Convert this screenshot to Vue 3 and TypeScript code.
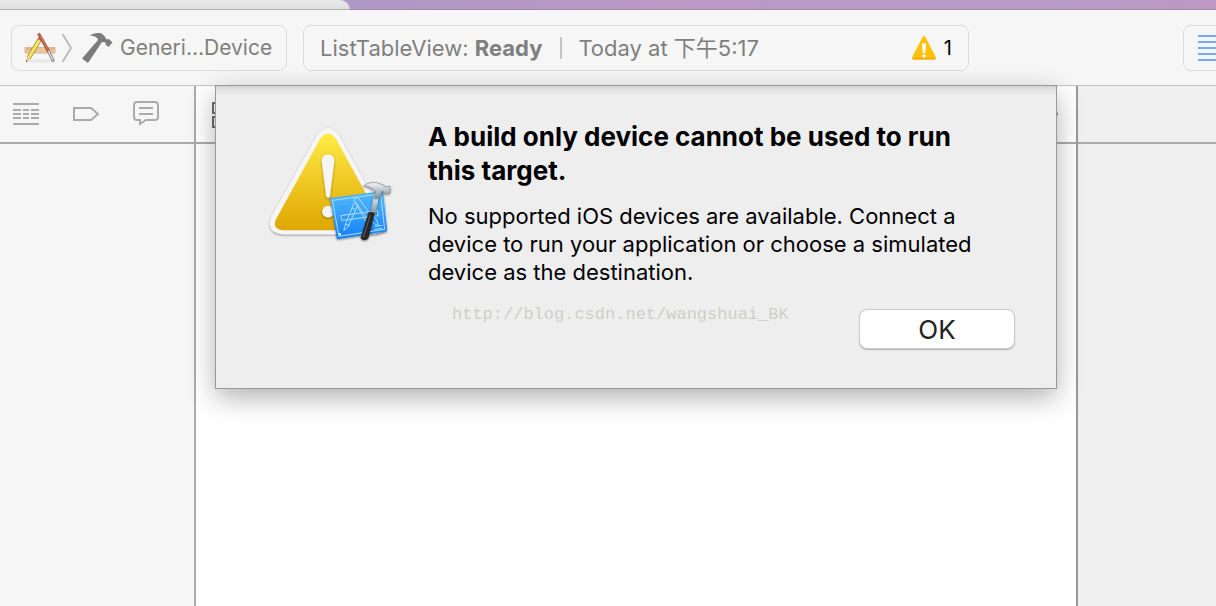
<script setup lang="ts">
import { ref } from 'vue'

const project = 'ListTableView:'
const state = 'Ready'
const time = 'Today at 下午5:17'
const warnings = 1
const sheetOpen = ref(true)
</script>

<template>
  <div class="window">
    <div class="desktop"><div class="tab"></div></div>

    <header class="toolbar">
      <button class="box scheme" type="button">
        <svg class="app-icon" viewBox="0 0 32 32" aria-hidden="true">
          <ellipse cx="16" cy="29" rx="14" ry="2" fill="#e9e9e9" />
          <path d="M1 15.500H31V21H1Z" fill="#ecc49c" stroke="#d9ab7e" stroke-width=".800" />
          <path d="M4 16v2M7 16v2M10 16v2M22 16v2M25 16v2M28 16v2" stroke="#bb8c60" stroke-width=".800" />
          <path d="M16 7L4.500 26" stroke="#9a8a3c" stroke-width="4.400" />
          <path d="M16 7L4.500 26" stroke="#f8e858" stroke-width="3" />
          <path d="M13.500 7l2-2.500 3 2-1.500 2.500z" fill="#f0545c" />
          <path d="M2.700 25l3.700 2.300L2 30z" fill="#e8c79a" />
          <path d="M2 28v2l1.500-1z" fill="#333" />
          <path d="M14.500 1.500L25 20" stroke="#9b4a36" stroke-width="3" />
          <path d="M15 2L25 19.500" stroke="#d9785c" stroke-width="1.500" />
          <path d="M24.500 19L29.500 29.500" stroke="#8a8080" stroke-width="3" />
          <path d="M24.500 19L29 28.500" stroke="#dedede" stroke-width="1.400" />
        </svg>
        <svg class="chevron" viewBox="0 0 12 30" aria-hidden="true">
          <path d="M1.500 1L10 15L1.500 29" fill="none" stroke="#b9b9b9" stroke-width="1.800" />
        </svg>
        <svg class="hammer" viewBox="0 0 32 32" aria-hidden="true">
          <path d="M9 3.500Q12 .700 19 1Q23 2 25.500 7.500L28 7L31.500 10.500L27.500 15L24.500 12.500V10.500L21 10L7 31L1 26.500L17 8Q16.500 4 9 3.500Z" fill="#7c7c7c" />
        </svg>
        <span class="device">Generi…Device</span>
      </button>

      <div class="box activity">
        <span>{{ project }} <b>{{ state }}</b></span>
        <span class="bar"></span>
        <span>{{ time }}</span>
        <span class="issues">
          <svg class="issue-icon" viewBox="0 0 26 26" aria-hidden="true">
            <path d="M13 2.500L23.500 23H2.500Z" fill="#ffc20c" stroke="#ffc20c" stroke-width="3" stroke-linejoin="round" />
            <path d="M2.500 23.500H23.500" stroke="#f5ae12" stroke-width="2" stroke-linecap="round" />
            <path d="M10.800 9q2.200-2 4.400 0l-1 9h-2.400z" fill="#fff" />
            <circle cx="13" cy="21" r="1.700" fill="#fff" />
          </svg>
          {{ warnings }}
        </span>
      </div>

      <button class="box layout" type="button" aria-label="Standard editor">
        <svg viewBox="0 0 32 28" aria-hidden="true">
          <path d="M0 2H32M0 8H32M0 14H32M0 20H32M0 26H32" stroke="#75a9f9" stroke-width="2" />
        </svg>
      </button>
    </header>

    <main class="workspace">
      <aside class="navigator">
        <nav class="strip nav-strip">
          <button class="nav" type="button" aria-label="Debug">
            <svg viewBox="0 0 28 28" aria-hidden="true">
              <path d="M1 4H27M1 24H27" stroke="#ababab" stroke-width="2" />
              <path d="M1 10H27M1 14H27M1 18H27" stroke="#ababab" stroke-width="2" stroke-dasharray="8 2 6 2 8" />
            </svg>
          </button>
          <button class="nav" type="button" aria-label="Breakpoints">
            <svg viewBox="0 0 28 28" aria-hidden="true">
              <path d="M2 8H19L26 14L19 20H2Z" fill="none" stroke="#ababab" stroke-width="2" />
            </svg>
          </button>
          <button class="nav" type="button" aria-label="Reports">
            <svg viewBox="0 0 28 28" aria-hidden="true">
              <path d="M5 2H23Q26 2 26 5V17Q26 20 23 20H14L8 24V20H5Q2 20 2 17V5Q2 2 5 2Z" fill="none" stroke="#ababab" stroke-width="2" />
              <path d="M7 8H21M7 14H21" stroke="#ababab" stroke-width="2" />
            </svg>
          </button>
        </nav>
      </aside>

      <section class="editor">
        <div class="strip jump-bar">
          <svg class="related" viewBox="0 0 28 28" aria-hidden="true">
            <path d="M1 3H11V13H1ZM1 17H11V27H1Z" fill="none" stroke="#707070" stroke-width="2" />
          </svg>
          <span class="dot"></span>
        </div>

        <div v-if="sheetOpen" class="sheet" role="alertdialog" aria-labelledby="sheet-title" aria-describedby="sheet-text">
          <svg class="alert-icon" viewBox="0 0 128 128" aria-hidden="true">
            <defs>
              <linearGradient id="yellow" x1="0" y1="0" x2="0" y2="1">
                <stop offset="0" stop-color="#ffeb45" />
                <stop offset="1" stop-color="#dfa602" />
              </linearGradient>
              <linearGradient id="blue" x1="0" y1="0" x2="0" y2="1">
                <stop offset="0" stop-color="#56bcfb" />
                <stop offset="1" stop-color="#147efb" />
              </linearGradient>
              <linearGradient id="steel" x1="0" y1="0" x2="0" y2="1">
                <stop offset="0" stop-color="#f4f7f9" />
                <stop offset="1" stop-color="#7d8c96" />
              </linearGradient>
              <filter id="soft" x="-20%" y="-20%" width="140%" height="140%">
                <feDropShadow dx="0" dy="1" stdDeviation="1.200" flood-opacity=".45" />
              </filter>
            </defs>
            <path filter="url(#soft)" d="M51 8Q62-6 73 8L119 92Q125 107 110 109H15Q-1 107 4 92Z" fill="#f6f6f6" />
            <path d="M54 12Q62 1 70 12L115 94Q119 104 107 105H17Q5 104 9 94Z" fill="url(#yellow)" />
            <g filter="url(#soft)" fill="#f5f5f5">
              <path d="M55.500 34Q56 28 62 28T68.500 34L64 70Q62 74 60 70Z" />
              <circle cx="62" cy="86" r="6" />
            </g>
            <g filter="url(#soft)"><path d="M64 72L118 65L122 106L71 114Z" fill="url(#blue)" /></g>
            <g fill="none" stroke="#a9defe" stroke-width="1">
              <path d="M66.500 74.500L115.500 68L119.500 104L73 111Z" />
              <path d="M75 90L112 85L113 90L76 95Z" />
              <path d="M88 78L79 101L78 105L82 102L92 80Q90 76 88 78ZM86 82l4 2M80 99l4 1" />
              <path d="M88 74L92 71L106 90L102 93ZM103 92Q110 100 113 100Q113 94 107 90M91 79L100 95" />
              <path d="M109 101l8-1M109 104l8-1" />
            </g>
            <path d="M73 109l2-.300" stroke="#fff" stroke-width="2" />
            <g filter="url(#soft)">
              <path d="M109 68L114 69L110 89H105Z" fill="url(#steel)" />
              <path d="M103.500 86L109.500 87L103 113Q99 117 95 113Z" fill="#252729" />
              <path d="M105 89L98 112" stroke="#606366" stroke-width="1" />
              <path d="M98 60Q107 53 118 59L121 61L125 60V67L121 68L117 65L114 73H109L110 65Q105 60 98 60Z" fill="url(#steel)" stroke="#71808a" stroke-width=".600" />
            </g>
          </svg>
          <div class="message">
            <h1 id="sheet-title">A build only device cannot be used to run this target.</h1>
            <p id="sheet-text">No supported iOS devices are available. Connect a device to run your application or choose a simulated device as the destination.</p>
            <div class="footer">
              <span class="watermark">http://blog.csdn.net/wangshuai_BK</span>
              <button class="ok" type="button" @click="sheetOpen = false">OK</button>
            </div>
          </div>
        </div>
      </section>

      <aside class="inspector"><div class="strip"></div></aside>
    </main>
  </div>
</template>

<style>
html,
body {
  margin: 0;
  overflow: hidden;
}
</style>

<style scoped>
.window {
  display: flex;
  flex-direction: column;
  height: 100vh;
  font-family: Inter, Roboto, "Noto Sans CJK SC", sans-serif;
  font-size: 22px;
  background: #f6f6f6;
}
* {
  box-sizing: border-box;
}
button {
  margin: 0;
  padding: 0;
  border: 0;
  background: none;
  font: inherit;
  color: inherit;
}
svg {
  display: block;
  flex: none;
}
.desktop {
  flex: none;
  height: 10px;
  background: linear-gradient(90deg, #ad98c6 28%, #bc98c5 55%, #b79bc6 85%, #bd98c4);
  border-bottom: 1px solid #a184a9;
}
.tab {
  width: 350px;
  height: 10px;
  border-radius: 0 10px 0 0;
  background: linear-gradient(#e9e9e9, #dfdfdf);
  border-bottom: 1px solid #adadad;
}
.toolbar {
  flex: none;
  display: flex;
  align-items: center;
  gap: 16px;
  height: 76px;
  padding-left: 11px;
  background: #f6f6f6;
  border-bottom: 1px solid #c4c4c4;
}
.box {
  display: flex;
  align-items: center;
  flex: none;
  height: 46px;
  border: 1px solid #dbdbdb;
  border-radius: 8px;
  color: #7f7f7f;
  line-height: 28px;
  white-space: nowrap;
}
.scheme {
  width: 276px;
  padding-left: 12px;
}
.app-icon {
  width: 32px;
  height: 32px;
}
.chevron {
  width: 12px;
  height: 30px;
  margin: 0 8px 0 5px;
}
.hammer {
  width: 32px;
  height: 32px;
  margin-right: 7px;
}
.device {
  font-size: 21px;
}
.activity {
  flex: 0 1 666px;
  padding: 0 16px;
}
.activity > span {
  height: 28px;
}
.activity > .bar {
  width: 2px;
  height: 22px;
  margin: 0 16px 0 18px;
  background: #c4c4c4;
}
.issues {
  display: flex;
  align-items: center;
  gap: 7px;
  margin-left: auto;
  color: #000;
  font-size: 20px;
}
.issue-icon {
  width: 26px;
  height: 26px;
}
.layout {
  width: 62px;
  margin-left: auto;
  margin-right: -29px;
  padding-left: 14px;
}
.layout svg {
  width: 32px;
  height: 28px;
}
.workspace {
  flex: 1;
  min-height: 0;
  display: flex;
}
.strip {
  display: flex;
  align-items: center;
  height: 58px;
  border-bottom: 2px solid #ababab;
}
.navigator {
  flex: none;
  width: 196px;
  border-right: 2px solid #ababab;
  background: #f6f6f6;
}
.nav-strip {
  gap: 32px;
  padding-left: 12px;
}
.nav svg {
  width: 28px;
  height: 28px;
}
.editor {
  flex: 1;
  position: relative;
  background: #fff;
}
.jump-bar {
  justify-content: space-between;
  padding: 0 18px 0 16px;
}
.related {
  width: 28px;
  height: 28px;
}
.dot {
  width: 4px;
  height: 4px;
  border-radius: 2px;
  background: #707070;
}
.inspector {
  flex: none;
  width: 140px;
  border-left: 2px solid #999;
  background: #f0f0f0;
}
.sheet {
  position: absolute;
  top: 0;
  left: 20px;
  right: 20px;
  display: flex;
  gap: 35px;
  padding: 34px 42px 40px 51px;
  color: #000;
  background: linear-gradient(#d4d4d4, #e6e6e6 5px, #eee 10px);
  box-shadow: 0 0 0 1px #999, 0 9px 26px rgba(0, 0, 0, 0.32);
}
.alert-icon {
  width: 126px;
  height: 126px;
  margin-top: 7px;
}
.message {
  flex: 1;
}
h1 {
  margin: 0 24px 14px 0;
  font-size: 26px;
  line-height: 34px;
  font-weight: 700;
}
p {
  margin: 0 24px 0 0;
  font-size: 22px;
  line-height: 28px;
}
.footer {
  display: flex;
  justify-content: space-between;
  align-items: flex-start;
  margin-top: 24px;
  padding-left: 24px;
}
.watermark {
  color: #cfcfc9;
  font: 17px/10px "Liberation Mono", monospace;
}
.ok {
  width: 154px;
  height: 38px;
  border-radius: 7px;
  background: #fff;
  box-shadow: 0 0 0 1px #cbcbcb, 0 1px 1px 1px #b5b5b5;
  color: #222;
  font-size: 26px;
}
</style>
